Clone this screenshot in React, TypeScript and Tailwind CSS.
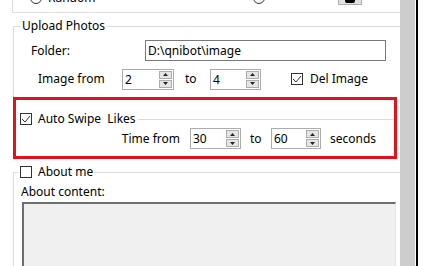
import React from "react";

function Radio() {
  return <div className="h-[12px] w-[12px] shrink-0 rounded-full border border-[#333333] bg-white" />;
}

function Check({ checked }: { checked?: boolean }) {
  return (
    <div className="flex h-[12px] w-[12px] shrink-0 items-center justify-center border border-[#333333] bg-white">
      {checked && (
        <svg width="10" height="10" viewBox="0 0 10 10">
          <path d="M1 5 L4 8 L9 2" fill="none" stroke="#333333" strokeWidth="1" />
        </svg>
      )}
    </div>
  );
}

function SpinBtns() {
  return (
    <div className="flex w-[14px] shrink-0 flex-col gap-[1px] py-[1px] pr-[1px]">
      <div className="flex h-[8px] items-center justify-center border border-[#adadad] bg-[#e5e5e5]">
        <svg width="5" height="3" viewBox="0 0 5 3">
          <path d="M0 3 L2.5 0 L5 3 Z" fill="#222222" />
        </svg>
      </div>
      <div className="flex h-[8px] items-center justify-center border border-[#adadad] bg-[#e5e5e5]">
        <svg width="5" height="3" viewBox="0 0 5 3">
          <path d="M0 0 L2.5 3 L5 0 Z" fill="#222222" />
        </svg>
      </div>
    </div>
  );
}

function Spin({ v, className }: { v: string; className: string }) {
  return (
    <div className={"flex h-[21px] shrink-0 border border-[#acacac] bg-white " + className}>
      <div className="flex-1 pl-[2px] leading-[19px]">{v}</div>
      <SpinBtns />
    </div>
  );
}

export default function App() {
  return (
    <div className="flex h-[266px] w-[427px] overflow-hidden bg-white font-['Noto_Sans',sans-serif] text-[12px] leading-[16px] text-black">
      <div className="w-[400px] shrink-0 overflow-hidden">
        {/* top strip (cut off) */}
        <div className="ml-[12px] h-[13px] overflow-hidden border-b border-l border-[#dcdcdc]">
          <div className="-mt-[10px] flex h-[16px] items-center">
            <div className="ml-[17px] flex w-[223px] items-center gap-[6px]">
              <Radio />
              <span>Random</span>
            </div>
            <div className="w-[85px]">
              <Radio />
            </div>
            <div className="flex h-[15px] w-[24px] items-end justify-center self-start border border-[#adadad] bg-[#e1e1e1] pb-[1px]">
              <div className="h-[4px] w-[10px] rounded-b-[2px] bg-black" />
            </div>
          </div>
        </div>

        {/* Upload Photos */}
        <fieldset className="ml-[13px] mt-[5px] w-[400px] border-x border-t border-[#dcdcdc] pb-[7px]">
          <legend className="ml-[6px] px-[2px]">Upload Photos</legend>
          <div className="mt-[6px] flex h-[21px] items-center">
            <div className="ml-[17px] w-[114px]">Folder:</div>
            <div className="h-[21px] w-[241px] border border-[#7a7a7a] bg-white pl-[2px] leading-[19px]">
              D:\qnibot\image
            </div>
          </div>
          <div className="mt-[7px] flex h-[22px] items-center">
            <div className="ml-[24px] w-[84px]">Image from</div>
            <Spin v="2" className="w-[52px]" />
            <div className="w-[36px] pl-[11px]">to</div>
            <Spin v="4" className="w-[51px]" />
            <div className="ml-[30px] flex items-center gap-[7px]">
              <Check checked />
              <span>Del Image</span>
            </div>
          </div>
        </fieldset>

        {/* Auto Swipe Likes (red annotation box) */}
        <div className="ml-[13px] h-[62px] w-[384px] border-[3px] border-[#e0121b]">
          <fieldset className="mt-[11px] border-t border-[#dcdcdc]">
            <legend className="ml-[2px] px-[2px]">
              <div className="flex items-center gap-[6px]">
                <Check checked />
                <span className="whitespace-pre">Auto Swipe  Likes</span>
              </div>
            </legend>
            <div className="mt-[1px] flex h-[21px] items-center">
              <div className="w-[174px] pr-[10px] text-right">Time from</div>
              <Spin v="30" className="w-[51px]" />
              <div className="w-[30px] pl-[9px]">to</div>
              <Spin v="60" className="w-[50px]" />
              <div className="pl-[9px]">seconds</div>
            </div>
          </fieldset>
        </div>

        {/* About me */}
        <fieldset className="ml-[13px] mt-[5px] w-[400px] border-x border-t border-[#dcdcdc]">
          <legend className="ml-[5px] px-[1px]">
            <div className="flex items-center gap-[6px]">
              <Check />
              <span>About me</span>
            </div>
          </legend>
          <div className="pl-[7px] pt-[4px]">About content:</div>
          <div className="ml-[8px] mt-[2px] h-[80px] w-[374px] border-l-2 border-t-2 border-r border-[#6e6e6e] border-r-[#e3e3e3] bg-[#f0f0f0]" />
        </fieldset>
      </div>
      {/* scrollbar & window edge */}
      <div className="w-[15px] shrink-0 bg-[#cdcdcd]" />
      <div className="w-[1px] shrink-0 bg-white" />
      <div className="w-[2px] shrink-0 bg-black" />
      <div className="flex-1 bg-white" />
    </div>
  );
}
